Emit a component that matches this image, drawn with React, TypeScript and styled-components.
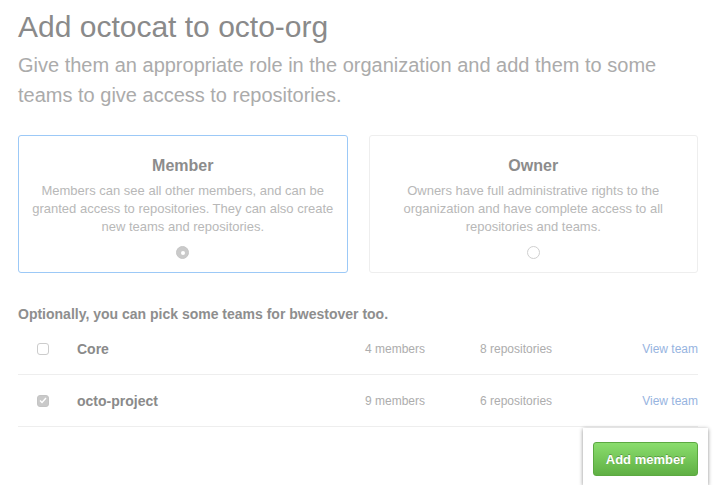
// App.tsx
import React from 'react';
import styled, { createGlobalStyle } from 'styled-components';

interface Role {
  key: string;
  name: string;
  description: string;
}

interface Team {
  name: string;
  members: number;
  repositories: number;
  checked: boolean;
}

const roles: Role[] = [
  {
    key: 'member',
    name: 'Member',
    description:
      'Members can see all other members, and can be granted access to repositories. They can also create new teams and repositories.',
  },
  {
    key: 'owner',
    name: 'Owner',
    description:
      'Owners have full administrative rights to the organization and have complete access to all repositories and teams.',
  },
];

const teams: Team[] = [
  { name: 'Core', members: 4, repositories: 8, checked: false },
  { name: 'octo-project', members: 9, repositories: 6, checked: true },
];

const GlobalStyle = createGlobalStyle`
  body {
    margin: 0;
    background: #fff;
    font-family: "Liberation Sans", Arial, Helvetica, sans-serif;
  }
`;

const Page = styled.div`
  width: 680px;
  margin-left: 18px;
  padding-top: 9px;
`;

const Title = styled.h1`
  margin: 0;
  font-size: 30px;
  line-height: 36px;
  font-weight: normal;
  color: #8a8a8a;
`;

const Lead = styled.p`
  margin: 5px 0 0;
  font-size: 20px;
  line-height: 30px;
  color: #ababab;
`;

const RoleGrid = styled.div`
  display: grid;
  grid-template-columns: 1fr 1fr;
  gap: 21px;
  margin-top: 25px;
`;

const RoleCard = styled.div<{ $selected: boolean }>`
  display: flex;
  flex-direction: column;
  align-items: center;
  height: 138px;
  box-sizing: border-box;
  padding: 20px 8px 0;
  border: 1px solid ${({ $selected }) => ($selected ? '#9cc9f7' : '#eeeeee')};
  border-radius: 3px;
  text-align: center;
`;

const RoleName = styled.div`
  font-size: 16px;
  line-height: 20px;
  font-weight: bold;
  color: #8c8c8c;
`;

const RoleText = styled.div`
  margin-top: 6px;
  font-size: 13px;
  line-height: 18px;
  color: #b8b8b8;
`;

const Radio = styled.span<{ $checked: boolean }>`
  display: block;
  margin-top: 10px;
  width: 13px;
  height: 13px;
  box-sizing: border-box;
  border-radius: 50%;
  border: 1px solid ${({ $checked }) => ($checked ? '#c6c6c6' : '#cfcfcf')};
  background: ${({ $checked }) => ($checked ? '#cacaca' : '#fff')};
  position: relative;

  &::after {
    content: '';
    display: ${({ $checked }) => ($checked ? 'block' : 'none')};
    position: absolute;
    left: 3.5px;
    top: 3.5px;
    width: 4px;
    height: 4px;
    border-radius: 50%;
    background: #fff;
  }
`;

const SectionLabel = styled.div`
  margin-top: 32px;
  font-size: 14px;
  line-height: 18px;
  font-weight: bold;
  color: #8e8e8e;
`;

const TeamList = styled.div``;

const TeamRow = styled.div`
  display: grid;
  grid-template-columns: 40px 288px 115px 1fr auto;
  align-items: center;
  height: 51px;
  padding-left: 19px;
  border-bottom: 1px solid #eeeeee;
`;

const Checkbox = styled.span<{ $checked: boolean }>`
  display: flex;
  align-items: center;
  justify-content: center;
  width: 12px;
  height: 12px;
  box-sizing: border-box;
  border-radius: 3px;
  border: 1px solid ${({ $checked }) => ($checked ? '#c4c4c4' : '#cccccc')};
  background: ${({ $checked }) => ($checked ? '#c9c9c9' : '#fff')};
`;

const TeamName = styled.span`
  font-size: 14px;
  font-weight: bold;
  color: #8a8a8a;
`;

const Meta = styled.span`
  font-size: 12px;
  color: #adadad;
`;

const ViewLink = styled.a`
  font-size: 12px;
  color: #97b4df;
  text-decoration: none;
`;

const Footer = styled.div`
  display: flex;
  justify-content: flex-end;
  margin-top: 1px;
  margin-right: -10px;
`;

const Highlight = styled.div`
  padding: 14px 10px 9px;
  background: #fff;
  box-shadow: 0 1px 4px rgba(0, 0, 0, 0.45);
`;

const AddButton = styled.button`
  display: block;
  width: 105px;
  height: 34px;
  padding: 0;
  border: 1px solid #5ca941;
  border-radius: 3px;
  background: linear-gradient(#8add6d, #60b044);
  color: #fff;
  font-family: "Liberation Sans", Arial, Helvetica, sans-serif;
  font-size: 13px;
  font-weight: bold;
  text-shadow: 0 -1px 0 rgba(0, 0, 0, 0.25);
  cursor: pointer;
`;

const App: React.FC = () => {
  return (
    <Page>
      <GlobalStyle />
      <Title>Add octocat to octo-org</Title>
      <Lead>
        Give them an appropriate role in the organization and add them to some teams to give
        access to repositories.
      </Lead>

      <RoleGrid>
        {roles.map((role) => (
          <RoleCard key={role.key} $selected={role.key === 'member'}>
            <RoleName>{role.name}</RoleName>
            <RoleText>{role.description}</RoleText>
            <Radio $checked={role.key === 'member'} />
          </RoleCard>
        ))}
      </RoleGrid>

      <SectionLabel>Optionally, you can pick some teams for bwestover too.</SectionLabel>

      <TeamList>
        {teams.map((team) => (
          <TeamRow key={team.name}>
            <Checkbox $checked={team.checked}>
              {team.checked && (
                <svg width="8" height="7" viewBox="0 0 8 7">
                  <path d="M1 3.6 L3 5.5 L7 1" fill="none" stroke="#fff" strokeWidth="1.4" />
                </svg>
              )}
            </Checkbox>
            <TeamName>{team.name}</TeamName>
            <Meta>{team.members} members</Meta>
            <Meta>{team.repositories} repositories</Meta>
            <ViewLink href="#">View team</ViewLink>
          </TeamRow>
        ))}
      </TeamList>

      <Footer>
        <Highlight>
          <AddButton>Add member</AddButton>
        </Highlight>
      </Footer>
    </Page>
  );
};

export default App;
